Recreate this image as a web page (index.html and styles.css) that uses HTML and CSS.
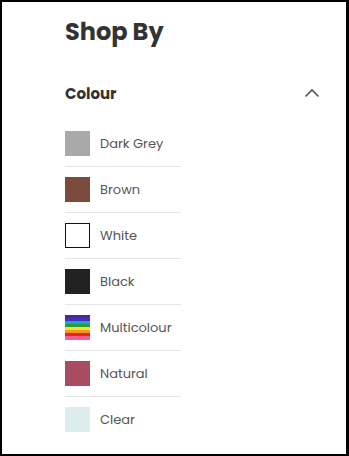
FILE: index.html
```html
<!DOCTYPE html>
<html lang="en">
<head>
  <meta charset="UTF-8" />
  <meta name="viewport" content="width=device-width, initial-scale=1.0"/>
  <title>Shop By</title>
  <link rel="stylesheet" href="styles.css">
</head>
<body>
  <div class="frame">
    <div class="sidebar">
      <h1>Shop By</h1>

      <div class="filter-head">
        <span>Colour</span>
        <svg class="chevron" width="16" height="10" viewBox="0 0 16 10">
          <path d="M1.5 8.5 L8 2 L14.5 8.5" fill="none" stroke="#555" stroke-width="1.6"/>
        </svg>
      </div>

      <ul class="swatches">
        <li><span class="swatch grey"></span>Dark Grey</li>
        <li><span class="swatch brown"></span>Brown</li>
        <li><span class="swatch white"></span>White</li>
        <li><span class="swatch black"></span>Black</li>
        <li><span class="swatch multi"></span>Multicolour</li>
        <li><span class="swatch natural"></span>Natural</li>
        <li><span class="swatch clear"></span>Clear</li>
      </ul>
    </div>
  </div>
</body>
</html>
```

FILE: styles.css
```css
body {
  margin: 0;
  font-family: "Poppins", "Open Sans", "Noto Sans", sans-serif;
  background: #fff;
  color: #333;
}
.frame {
  box-sizing: border-box;
  width: 349px;
  height: 456px;
  border: 2px solid #000;
  border-right-width: 3px;
  overflow: hidden;
}
.sidebar {
  padding: 12px 29px 0 63px;
}
h1 {
  margin: 0;
  font-size: 24px;
  font-weight: 700;
  color: #333;
  line-height: 36px;
}
.filter-head {
  display: flex;
  align-items: center;
  justify-content: space-between;
  margin-top: 30px;
  height: 26px;
  font-size: 15px;
  font-weight: 700;
  color: #333;
}
.chevron {
  margin-right: -3px;
}
.swatches {
  list-style: none;
  margin: 15px 0 0;
  padding: 0;
  width: 116px;
}
.swatches li {
  display: flex;
  align-items: center;
  gap: 10px;
  padding: 10px 0;
  border-bottom: 1px solid #e6e6e6;
  font-size: 13px;
  color: #555;
  white-space: nowrap;
}
.swatches li:last-child {
  border-bottom: none;
}
.swatch {
  box-sizing: border-box;
  width: 25px;
  height: 25px;
  flex: none;
}
.grey { background: #a9a9a9; }
.brown { background: #7a4a3a; }
.white { background: #fff; border: 1px solid #111; }
.black { background: #222; }
.natural { background: #a94c61; }
.clear { background: #dbeeed; }
.multi {
  background: linear-gradient(to bottom,
    #5e1d9a 0 3px, #3b35b8 3px 6px, #1aa1d8 6px 9px, #2e9b2e 9px 12px,
    #f3e23a 12px 15px, #f49a1e 15px 18px, #e8222a 18px 21px, #f1608f 21px 25px);
}
```
